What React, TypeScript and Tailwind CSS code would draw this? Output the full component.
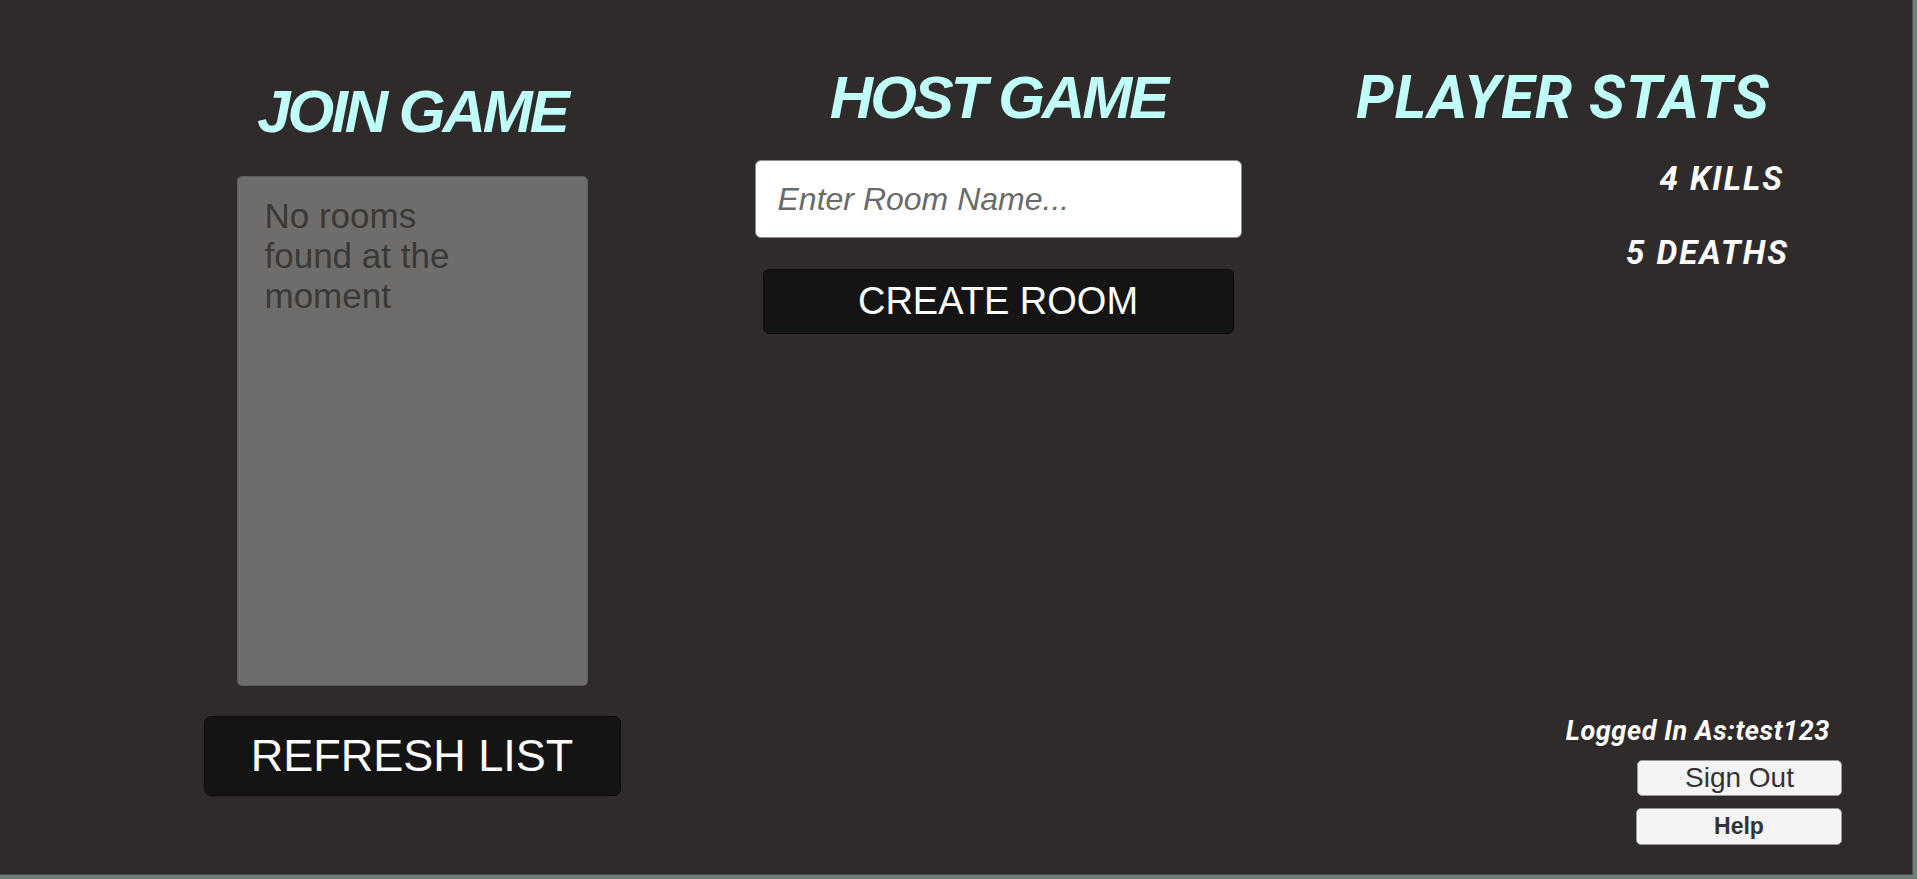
export default function App() {
  return (
    <div className="w-full h-[879px] bg-[#6f7f7c] overflow-hidden">
      <div className="w-[1913px] h-[875px] bg-[#2f2b2a] border-r border-b border-[#4b5150] flex pl-[200px]">
        {/* Join game */}
        <div className="w-[424px] flex flex-col items-center pt-[82px]">
          <h1 className="font-['Liberation_Sans',Arial,sans-serif] font-bold italic text-[60px] leading-[60px] tracking-[-3px] text-[#c0fff9]">
            JOIN GAME
          </h1>
          <div className="mt-[34px] w-[351px] h-[510px] bg-[#6e6d6b] border border-[#5e5d5b] rounded-[5px] pl-[27px] pt-[19px]">
            <p className="w-[220px] font-['Liberation_Sans',Arial,sans-serif] text-[35px] leading-[40px] text-[#3a3938]">
              No rooms found at the moment
            </p>
          </div>
          <button className="mt-[30px] w-[417px] h-[80px] bg-[#141414] border border-[#0b0b0b] rounded-[7px] font-['Liberation_Sans',Arial,sans-serif] text-[45px] text-white">
            REFRESH LIST
          </button>
        </div>

        {/* Host game */}
        <div className="ml-[130px] w-[488px] flex flex-col items-center pt-[68px]">
          <h1 className="font-['Liberation_Sans',Arial,sans-serif] font-bold italic text-[60px] leading-[60px] tracking-[-3px] text-[#c0fff9]">
            HOST GAME
          </h1>
          <input
            className="mt-[32px] w-[487px] h-[78px] bg-white border border-[#8d8d8d] rounded-[6px] pl-[22px] font-['Liberation_Sans',Arial,sans-serif] text-[32px] text-[#222] placeholder:text-[#6a6a6a] placeholder:italic outline-none"
            placeholder="Enter Room Name..."
          />
          <button className="mt-[31px] w-[471px] h-[65px] bg-[#141414] border border-[#0b0b0b] rounded-[6px] font-['Liberation_Sans',Arial,sans-serif] text-[38px] text-white">
            CREATE ROOM
          </button>
        </div>

        {/* Player stats */}
        <div className="ml-[58px] w-[526px] h-full flex flex-col pt-[68px] pb-[29px]">
          <h1 className="self-center font-['Roboto',sans-serif] font-bold italic text-[60px] leading-[60px] tracking-[1px] text-[#c0fff9]">
            PLAYER STATS
          </h1>
          <div className="flex flex-col items-end font-['Roboto',sans-serif] font-bold italic text-[33px] leading-[32px] tracking-[2px] text-white">
            <p className="mt-[35px] mr-[42px]">4 KILLS</p>
            <p className="mt-[42px] mr-[37px]">5 DEATHS</p>
          </div>
          <div className="mt-auto -mr-[16px] flex flex-col items-end">
            <p className="mr-[12px] font-['Roboto',sans-serif] font-bold italic text-[27px] leading-[27px] tracking-[0.6px] text-white">
              Logged In As:test123
            </p>
            <button className="mt-[15px] w-[205px] h-[36px] bg-[#f4f4f4] border border-[#9a9a9a] rounded-[5px] font-['Liberation_Sans',Arial,sans-serif] text-[28px] leading-none text-[#333]">
              Sign Out
            </button>
            <button className="mt-[12px] w-[206px] h-[37px] bg-[#f4f4f4] border border-[#9a9a9a] rounded-[5px] font-['Liberation_Sans',Arial,sans-serif] font-bold text-[23px] leading-none text-[#333]">
              Help
            </button>
          </div>
        </div>
      </div>
    </div>
  );
}
